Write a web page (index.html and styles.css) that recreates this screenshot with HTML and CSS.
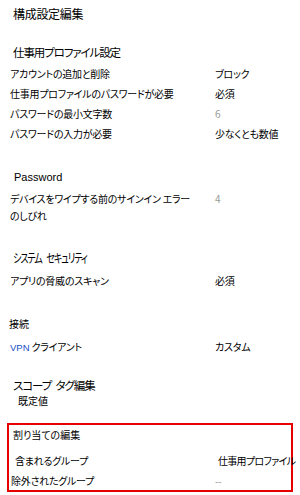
FILE: index.html
```html
<!DOCTYPE html>
<html lang="ja">
<head>
<meta charset="utf-8">
<link rel="stylesheet" href="styles.css">
</head>
<body>
<div class="page">
  <div class="title">構成設定編集</div>

  <div class="section-h s-profile">仕事用プロファイル設定</div>
  <div class="rows">
    <div class="row"><span class="label">アカウントの追加と削除</span><span class="value">ブロック</span></div>
    <div class="row"><span class="label">仕事用プロファイルのパスワードが必要</span><span class="value">必須</span></div>
    <div class="row"><span class="label">パスワードの最小文字数</span><span class="value muted">6</span></div>
    <div class="row"><span class="label">パスワードの入力が必要</span><span class="value">少なくとも数値</span></div>
  </div>

  <div class="sub-h s-password">Password</div>
  <div class="row two-line"><span class="label">デバイスをワイプする前のサインイン エラー<br>のしびれ</span><span class="value muted">4</span></div>

  <div class="section-h s-system"><span class="narrow">システム セキュリティ</span></div>
  <div class="row s-scan"><span class="label">アプリの脅威のスキャン</span><span class="value">必須</span></div>

  <div class="sub-h s-connect">接続</div>
  <div class="row s-vpn"><span class="label"><span class="vpn">VPN</span> クライアント</span><span class="value">カスタム</span></div>

  <div class="section-h s-scope">スコープ タグ編集</div>
  <div class="scope-value">既定値</div>

  <div class="assign-box">
    <div class="assign-h">割り当ての編集</div>
    <div class="row inc"><span class="label">含まれるグループ</span><span class="value val-inc">仕事用プロファイル</span></div>
    <div class="row exc"><span class="label">除外されたグループ</span><span class="value muted">--</span></div>
  </div>
</div>
</body>
</html>
```

FILE: styles.css
```css
* { box-sizing: border-box; }
html, body { margin: 0; padding: 0; background: #fff; }
body {
  font-family: "Noto Sans CJK JP", "Noto Sans", sans-serif;
  font-feature-settings: "palt";
  color: #000;
  width: 300px;
  height: 495px;
  overflow: hidden;
}
.page { padding: 4px 0 0 0; }
.title {
  font-size: 12px;
  line-height: 20px;
  padding-left: 13px;
  letter-spacing: -0.3px;
}
.section-h {
  font-size: 11.5px;
  line-height: 20px;
  padding-left: 13px;
  letter-spacing: -1.1px;
  word-spacing: 3px;
}
.narrow {
  display: inline-block;
  font-size: 12.5px;
  letter-spacing: -1.4px;
  word-spacing: 5px;
  transform: scaleX(0.72);
  transform-origin: left center;
}
.s-profile { margin-top: 18px; }
.rows { margin-top: 2px; }
.row {
  display: grid;
  grid-template-columns: 205px 1fr;
  font-size: 10px;
  line-height: 20px;
  padding-left: 10px;
  white-space: nowrap;
  letter-spacing: -0.25px;
}
.muted { color: #999; }
.sub-h {
  font-size: 10.5px;
  line-height: 20px;
  padding-left: 13px;
}
.s-password {
  margin-top: 23px;
  font-family: "Liberation Sans", "Noto Sans CJK JP", sans-serif;
  font-size: 11px;
  padding-left: 14px;
}
.two-line { margin-top: 3px; line-height: 17px; }
.s-system { margin-top: 24px; }
.s-scan { margin-top: 3px; }
.s-connect { margin-top: 23px; font-size: 10px; padding-left: 9px; }
.s-vpn { margin-top: 3px; }
.vpn {
  font-family: "Liberation Sans", sans-serif;
  color: #1a4fc4;
  font-size: 9.5px;
  letter-spacing: 0;
}
.s-scope { margin-top: 17px; }
.scope-value {
  font-size: 10px;
  line-height: 20px;
  padding-left: 18px;
  margin-top: -4px;
}
.assign-box {
  margin: 12px 0 0 7px;
  width: 286px;
  height: 69px;
  border: 2px solid #e60000;
}
.assign-h {
  font-size: 10px;
  line-height: 20px;
  padding-left: 4px;
}
.inc { margin-top: 6px; padding-left: 6px; grid-template-columns: 203px 1fr; }
.exc { padding-left: 2px; grid-template-columns: 204px 1fr; }
.val-inc { letter-spacing: -0.7px; }
```
